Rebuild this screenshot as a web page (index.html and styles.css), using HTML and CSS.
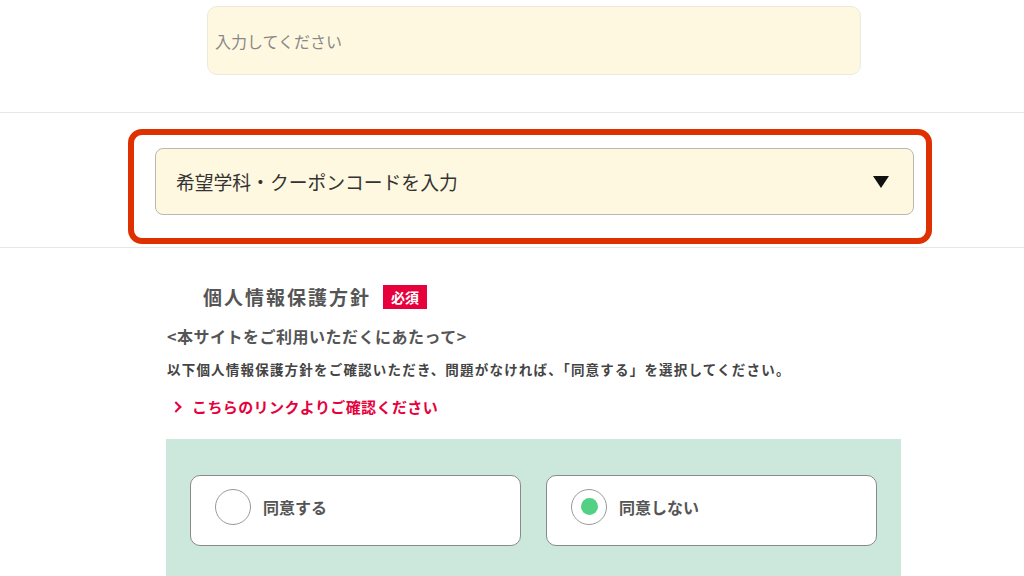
FILE: index.html
```html
<!DOCTYPE html>
<html lang="ja">
<head>
  <meta charset="UTF-8">
  <meta name="viewport" content="width=device-width, initial-scale=1.0">
  <title>お問い合わせフォーム</title>
  <link rel="stylesheet" href="styles.css">
</head>
<body>
  <div class="form-row first-row">
    <div class="wrap">
      <input class="text-input" type="text" placeholder="入力してください">
    </div>
  </div>

  <div class="form-row">
    <div class="wrap">
      <div class="highlight-box">
        <div class="select-box">
          <span>希望学科・クーポンコードを入力</span>
          <span class="arrow"></span>
        </div>
      </div>
    </div>
  </div>

  <div class="privacy">
    <div class="wrap">
      <div class="privacy-inner">
        <h2 class="privacy-title">個人情報保護方針 <span class="required">必須</span></h2>
        <p class="privacy-lead">&lt;本サイトをご利用いただくにあたって&gt;</p>
        <p class="privacy-text">以下個人情報保護方針をご確認いただき、問題がなければ、「同意する」を選択してください。</p>
        <a class="privacy-link" href="#"><span class="chevron"></span>こちらのリンクよりご確認ください</a>

        <div class="agree-panel">
          <label class="agree-card">
            <span class="radio"></span>
            <span class="agree-label">同意する</span>
          </label>
          <label class="agree-card">
            <span class="radio checked"></span>
            <span class="agree-label">同意しない</span>
          </label>
        </div>
      </div>
    </div>
  </div>
</body>
</html>
```

FILE: styles.css
```css
body {
  margin: 0;
  background: #fff;
  font-family: "Noto Sans CJK JP", "Noto Sans", sans-serif;
  color: #444;
  overflow: hidden;
}
.wrap {
  padding-left: 44px;
}
.form-row {
  border-bottom: 1px solid #e6e6e6;
}
.first-row {
  padding: 6px 0 37px;
}
.text-input {
  display: block;
  width: 654px;
  height: 69px;
  margin: 0 auto;
  box-sizing: border-box;
  padding: 0 7px;
  border: 1px solid #ece9df;
  border-radius: 10px;
  background: #fff8e0;
  font-family: inherit;
  font-size: 16px;
  color: #555;
  outline: none;
}
.text-input::placeholder {
  color: #888;
}
.highlight-box {
  width: 804px;
  box-sizing: border-box;
  margin: 16px 0 3px 84px;
  padding: 13px 12px 23px 21px;
  border: 6px solid #de3000;
  border-radius: 14px;
}
.select-box {
  display: flex;
  align-items: center;
  justify-content: space-between;
  height: 67px;
  box-sizing: border-box;
  padding: 0 24px 0 20px;
  border: 1px solid #b9b9b0;
  border-radius: 8px;
  background: #fff8e0;
  font-size: 18.8px;
  color: #333;
}
.arrow {
  width: 0;
  height: 0;
  border-left: 8px solid transparent;
  border-right: 8px solid transparent;
  border-top: 12px solid #111;
}
.privacy {
  padding-top: 36px;
}
.privacy-inner {
  margin-left: 122px;
  width: 735px;
}
.privacy-title {
  display: flex;
  align-items: center;
  margin: 0 0 16px 37px;
  font-size: 19px;
  line-height: 25px;
  letter-spacing: 2px;
  color: #555;
}
.required {
  display: inline-block;
  margin-left: 12px;
  padding: 0 8px;
  height: 24px;
  line-height: 24px;
  background: #e6003c;
  color: #fff;
  font-size: 14px;
  letter-spacing: 0;
}
.privacy-lead {
  margin: 0 0 12px 1px;
  font-size: 16px;
  line-height: 22px;
  font-weight: bold;
  letter-spacing: 0.5px;
  color: #555;
}
.privacy-text {
  margin: 0 0 17px 1px;
  font-size: 13.5px;
  line-height: 20px;
  font-weight: bold;
  letter-spacing: 1.2px;
  color: #444;
}
.privacy-link {
  display: flex;
  align-items: center;
  margin-left: 6px;
  font-size: 15px;
  line-height: 22px;
  font-weight: bold;
  letter-spacing: 0.4px;
  color: #e6003c;
  text-decoration: none;
}
.chevron {
  width: 6px;
  height: 6px;
  margin-right: 12px;
  border-top: 2.5px solid #e6003c;
  border-right: 2.5px solid #e6003c;
  transform: rotate(45deg);
}
.agree-panel {
  display: grid;
  grid-template-columns: 1fr 1fr;
  gap: 25px;
  margin-top: 21px;
  padding: 36px 24px 40px;
  background: #cce8dc;
}
.agree-card {
  display: flex;
  align-items: center;
  height: 71px;
  box-sizing: border-box;
  padding: 0 0 8px 24px;
  border: 1px solid #8a8a8a;
  border-radius: 10px;
  background: #fff;
}
.radio {
  display: flex;
  align-items: center;
  justify-content: center;
  width: 36px;
  height: 36px;
  box-sizing: border-box;
  border: 1px solid #999;
  border-radius: 50%;
  margin-right: 12px;
}
.radio.checked::after {
  content: "";
  width: 17px;
  height: 17px;
  border-radius: 50%;
  background: #52d184;
}
.agree-label {
  font-size: 16px;
  font-weight: bold;
  color: #555;
}
```
